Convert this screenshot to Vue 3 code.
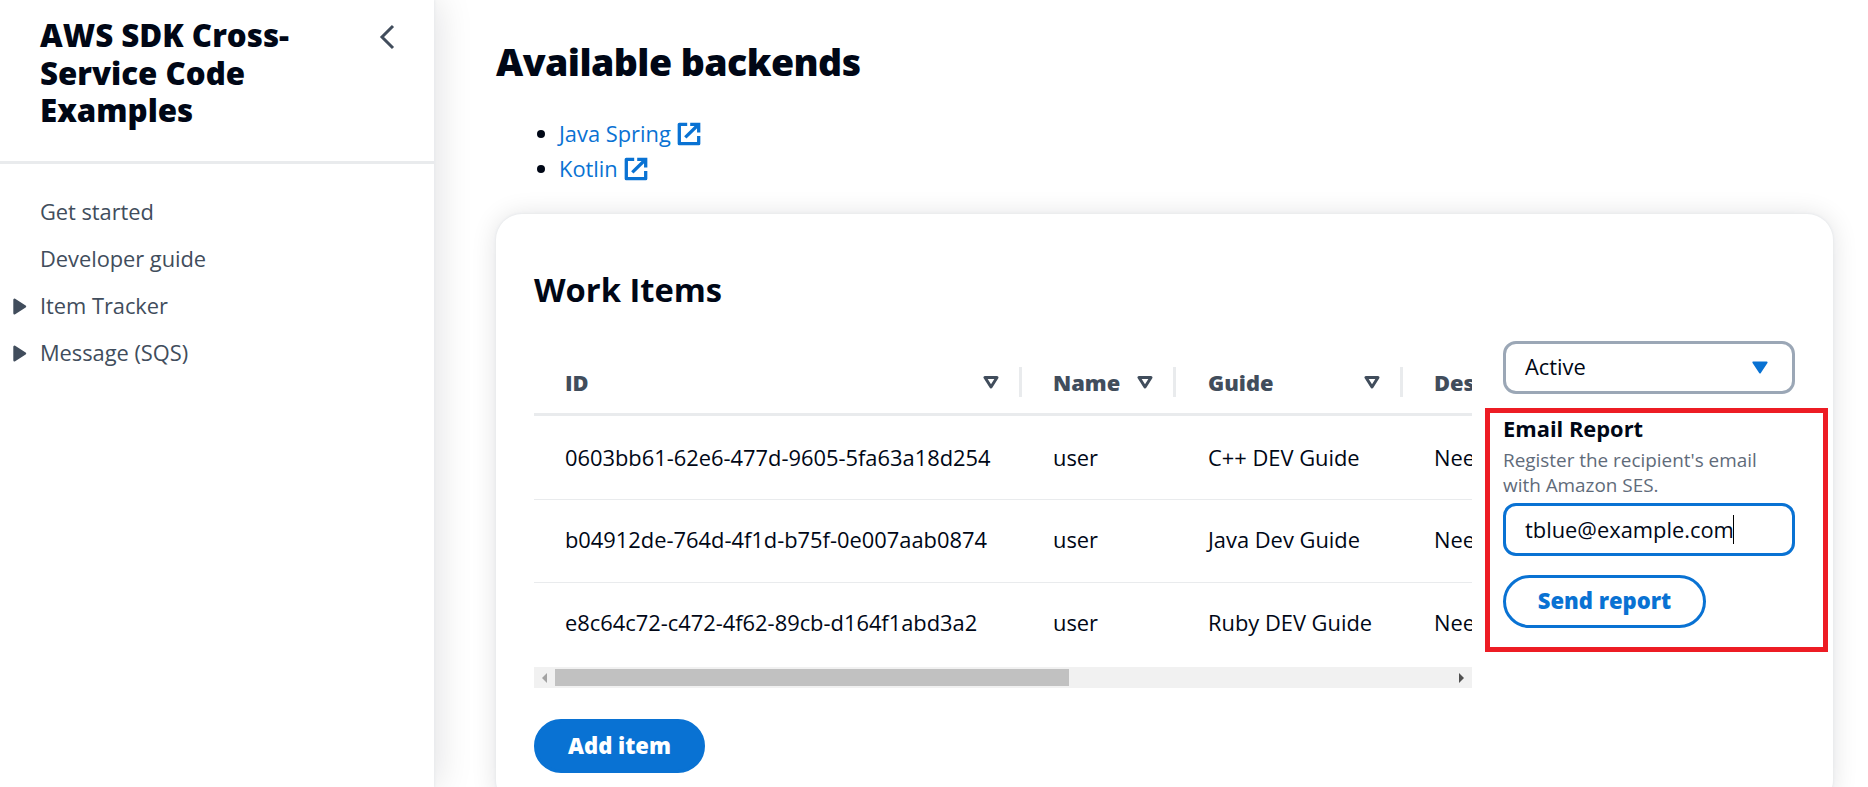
<script setup>
const links = [
  { label: 'Get started', group: false },
  { label: 'Developer guide', group: false },
  { label: 'Item Tracker', group: true },
  { label: 'Message (SQS)', group: true }
]
const backends = ['Java Spring', 'Kotlin']
const columns = ['ID', 'Name', 'Guide', 'Des']
const rows = [
  ['0603bb61-62e6-477d-9605-5fa63a18d254', 'user', 'C++ DEV Guide', 'Nee'],
  ['b04912de-764d-4f1d-b75f-0e007aab0874', 'user', 'Java Dev Guide', 'Nee'],
  ['e8c64c72-c472-4f62-89cb-d164f1abd3a2', 'user', 'Ruby DEV Guide', 'Nee']
]
</script>

<template>
  <div class="page">
    <aside class="sidebar">
      <header class="side-head">
        <h2>AWS SDK Cross-<br />Service Code<br />Examples</h2>
        <svg class="chevron" width="16" height="26" viewBox="0 0 16 26"><path d="M14 2 3 13l11 11" fill="none" stroke="#414d5c" stroke-width="3" /></svg>
      </header>
      <nav>
        <a v-for="l in links" :key="l.label" class="nav-link">
          <span class="marker">
            <svg v-if="l.group" width="14" height="17" viewBox="0 0 14 17"><path d="M1.5 1.8v13.4L12 8.5z" fill="#414d5c" stroke="#414d5c" stroke-width="2.4" stroke-linejoin="round" /></svg>
          </span>
          <span class="nav-text">{{ l.label }}</span>
        </a>
      </nav>
    </aside>

    <main class="main">
      <h1>Available backends</h1>
      <ul class="backends">
        <li v-for="b in backends" :key="b">
          <i class="dot"></i>
          <a>{{ b }}</a>
          <svg width="24" height="24" viewBox="0 0 24 24" fill="none" stroke="#0972d3" stroke-width="3.3"><path d="M10.2 2.3H2.3v19.4h19.4v-7.6" stroke-linejoin="round" /><path d="M13.2 2.3h8.5v8.2M21.5 2.5 8.3 15.4" /></svg>
        </li>
      </ul>

      <section class="card">
        <h3>Work Items</h3>
        <div class="content">
          <div class="table">
            <div class="row head">
              <div v-for="(c, i) in columns" :key="c" class="cell">
                <span>{{ c }}</span>
                <svg v-if="i < 3" width="16" height="14" viewBox="0 0 16 14"><path d="M2 2.5h12L8 12z" fill="none" stroke="#414d5c" stroke-width="3" stroke-linejoin="round" /></svg>
              </div>
            </div>
            <div v-for="r in rows" :key="r[0]" class="row">
              <div v-for="(v, i) in r" :key="i" class="cell">{{ v }}</div>
            </div>
            <div class="scroll">
              <svg width="5" height="10" viewBox="0 0 5 10"><path d="M5 0v10L0 5z" fill="#a3a3a3" /></svg>
              <div class="thumb"></div>
              <svg class="right" width="5" height="10" viewBox="0 0 5 10"><path d="M0 0v10l5-5z" fill="#505050" /></svg>
            </div>
            <button class="btn primary">Add item</button>
          </div>

          <div class="side">
            <div class="field select">
              <span>Active</span>
              <svg width="16" height="13" viewBox="0 0 16 13"><path d="M1.4 1.4h13.2L8 11.4z" fill="#0972d3" stroke="#0972d3" stroke-width="2" stroke-linejoin="round" /></svg>
            </div>
            <div class="report">
              <div class="label">Email Report</div>
              <div class="hint">Register the recipient's email<br />with Amazon SES.</div>
              <div class="field input"><span>tblue@example.com</span><i class="caret"></i></div>
              <button class="btn outline">Send report</button>
            </div>
          </div>
        </div>
      </section>
    </main>
  </div>
</template>

<style>
html, body { margin: 0; overflow: hidden; background: #fff; }
</style>

<style scoped>
* { box-sizing: border-box; }
.page {
  display: flex; width: 1868px; height: 787px; overflow: hidden; background: #fff; color: #000716;
  font-family: "Open Sans", "Noto Sans", sans-serif; font-size: 21.875px; line-height: 35px; white-space: nowrap;
}
h1, h2, h3, ul { margin: 0; padding: 0; }
.sidebar { flex: none; width: 434px; height: 787px; box-shadow: 1px 0 2px #e9ebed, 4px 0 34px rgba(0, 7, 22, 0.12); }
.side-head { display: flex; justify-content: space-between; align-items: flex-start; height: 164px; padding: 17px 39px 0 40px; border-bottom: 3px solid #e9ebed; }
.side-head h2 { font-size: 31.25px; line-height: 37.5px; font-weight: 800; }
.chevron { margin-top: 6.5px; }
nav { padding-top: 25px; }
.nav-link { display: flex; align-items: center; height: 47px; color: #414d5c; }
.nav-text { padding-bottom: 2px; letter-spacing: -0.04px; }
.marker { display: flex; width: 40px; padding-left: 13px; }

.main { flex: none; width: 1399px; padding: 38px 0 0 62px; }
h1 { font-size: 37.5px; line-height: 48px; font-weight: 800; letter-spacing: -0.56px; }
.backends { list-style: none; padding: 30px 0 0 41px; }
.backends li { display: flex; align-items: center; height: 35px; }
.backends a { margin: 0 6px 0 14px; color: #0972d3; }
.dot { width: 8px; height: 8px; border-radius: 50%; background: #000716; }
.card { width: 1337px; height: 592px; margin-top: 28px; padding: 51px 38px 0; border-radius: 26px; background: #fff; box-shadow: 0 0 2px 1px #e9ebed, 0 1px 26px rgba(0, 7, 22, 0.12); }
h3 { font-size: 32.7px; line-height: 50px; font-weight: 700; }
.content { display: flex; }
.table { flex: none; width: 938px; padding-top: 32px; overflow: hidden; }
.row { display: grid; grid-template-columns: 488px 154px 227px 69px; height: 83px; border-bottom: 1px solid #e9ebed; align-items: center; }
.row:nth-child(2) { height: 84px; }
.row:nth-child(3) { padding-bottom: 4px; }
.row:nth-child(4) { height: 84px; padding-bottom: 6px; border-bottom: 0; }
.row.head { height: 69px; padding-top: 4px; border-bottom: 3px solid #e9ebed; font-weight: 800; color: #414d5c; }
.cell { min-width: 0; padding-left: 31px; overflow: hidden; }
.cell:nth-child(3) { padding-left: 32px; }
.head .cell { display: flex; justify-content: space-between; align-items: center; height: 30px; padding-right: 20px; border-right: 3px solid #e9ebed; }
.head .cell:last-child { padding-right: 0; border-right: 0; }
.scroll { display: flex; align-items: center; height: 21px; padding: 0 8px; background: #f1f1f1; }
.thumb { width: 514px; height: 17px; margin-left: 8px; background: #c1c1c1; }
.right { margin-left: auto; }
.btn { display: block; height: 53px; border: 3px solid #0972d3; border-radius: 27px; padding: 0 0 2px; font: 800 22px/45px "Open Sans", "Noto Sans", sans-serif; }
.primary { width: 171px; height: 54px; margin-top: 31px; background: #0972d3; color: #fff; }
.outline { width: 203px; margin-top: 19px; background: #fff; color: #0972d3; }
.side { width: 343px; margin: 26px 0 0 13px; flex: none; }
.field { display: flex; align-items: center; width: 292px; height: 53px; padding: 0 24px 0 19px; border: 3px solid #9ba7b6; border-radius: 13px; }
.select { justify-content: space-between; margin-left: 18px; }
.select span { padding-bottom: 2px; }
.report { height: 244px; margin-top: 14px; padding: 0 13px; border: 5px solid #ed1c24; }
.label { line-height: 32px; font-weight: 700; }
.hint { font-size: 18.9px; line-height: 25px; color: #5f6b7a; margin-top: 3px; }
.input { margin-top: 5px; border-color: #0972d3; }
.caret { width: 1px; height: 29px; margin-left: -1px; background: #000; }
</style>
